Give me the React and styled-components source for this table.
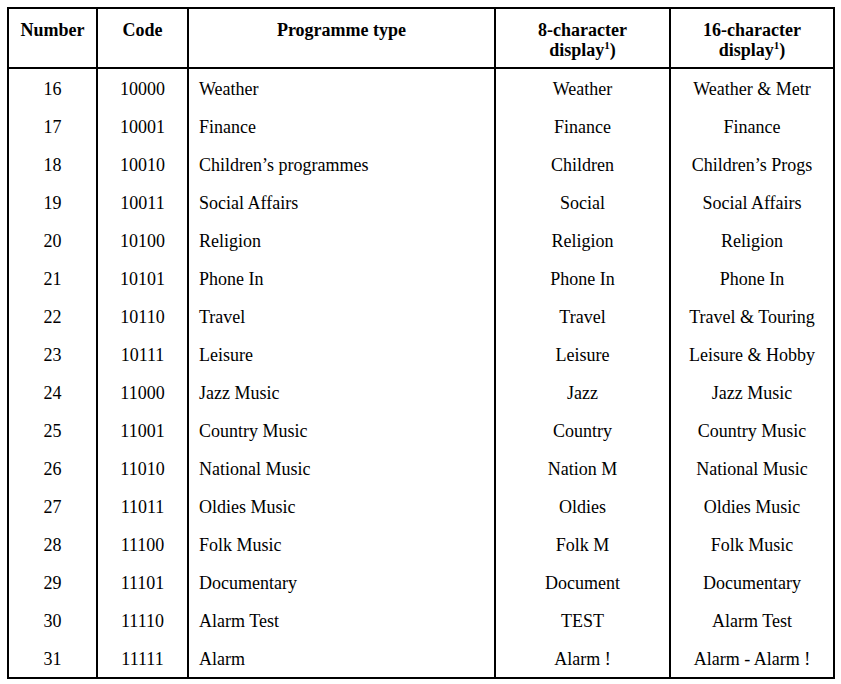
import React from 'react';
import styled, { createGlobalStyle } from 'styled-components';

const GlobalStyle = createGlobalStyle`
  html, body {
    margin: 0;
    padding: 0;
    background: #fff;
  }
`;

const Page = styled.div`
  padding: 7px 0 0 7px;
  font-family: "Liberation Serif", "Times New Roman", serif;
  color: #000;
`;

const Table = styled.table`
  border-collapse: collapse;
  table-layout: fixed;
  width: 826px;
  border: 2px solid #000;
  font-size: 18px;
`;

const HeadCell = styled.th`
  border: 2px solid #000;
  height: 47px;
  padding: 11px 4px 0;
  vertical-align: top;
  font-weight: bold;
  line-height: 20px;
  text-align: center;
`;

const Cell = styled.td`
  border-left: 2px solid #000;
  border-right: 2px solid #000;
  height: 37px;
  padding: 1px ${p => (p.$left ? '10px' : '4px')} 0;
  text-align: ${p => (p.$left ? 'left' : 'center')};
  vertical-align: middle;
  line-height: 20px;
  white-space: nowrap;
`;

const Sup = styled.sup`
  font-size: 11px;
  line-height: 0;
  vertical-align: top;
  position: relative;
  top: 5px;
`;

const rows = [
  [16, '10000', 'Weather', 'Weather', 'Weather & Metr'],
  [17, '10001', 'Finance', 'Finance', 'Finance'],
  [18, '10010', 'Children’s programmes', 'Children', 'Children’s Progs'],
  [19, '10011', 'Social Affairs', 'Social', 'Social Affairs'],
  [20, '10100', 'Religion', 'Religion', 'Religion'],
  [21, '10101', 'Phone In', 'Phone In', 'Phone In'],
  [22, '10110', 'Travel', 'Travel', 'Travel & Touring'],
  [23, '10111', 'Leisure', 'Leisure', 'Leisure & Hobby'],
  [24, '11000', 'Jazz Music', 'Jazz', 'Jazz Music'],
  [25, '11001', 'Country Music', 'Country', 'Country Music'],
  [26, '11010', 'National Music', 'Nation M', 'National Music'],
  [27, '11011', 'Oldies Music', 'Oldies', 'Oldies Music'],
  [28, '11100', 'Folk Music', 'Folk M', 'Folk Music'],
  [29, '11101', 'Documentary', 'Document', 'Documentary'],
  [30, '11110', 'Alarm Test', 'TEST', 'Alarm Test'],
  [31, '11111', 'Alarm', 'Alarm !', 'Alarm - Alarm !'],
];

const App = () => (
  <>
    <GlobalStyle />
    <Page>
      <Table>
        <colgroup>
          <col style={{ width: 89 }} />
          <col style={{ width: 91 }} />
          <col style={{ width: 307 }} />
          <col style={{ width: 175 }} />
          <col style={{ width: 164 }} />
        </colgroup>
        <thead>
          <tr>
            <HeadCell>Number</HeadCell>
            <HeadCell>Code</HeadCell>
            <HeadCell>Programme type</HeadCell>
            <HeadCell>8-character<br />display<Sup>1</Sup>)</HeadCell>
            <HeadCell>16-character<br />display<Sup>1</Sup>)</HeadCell>
          </tr>
        </thead>
        <tbody>
          {rows.map(r => (
            <tr key={r[0]}>
              <Cell>{r[0]}</Cell>
              <Cell>{r[1]}</Cell>
              <Cell $left>{r[2]}</Cell>
              <Cell>{r[3]}</Cell>
              <Cell>{r[4]}</Cell>
            </tr>
          ))}
        </tbody>
      </Table>
    </Page>
  </>
);

export default App;
